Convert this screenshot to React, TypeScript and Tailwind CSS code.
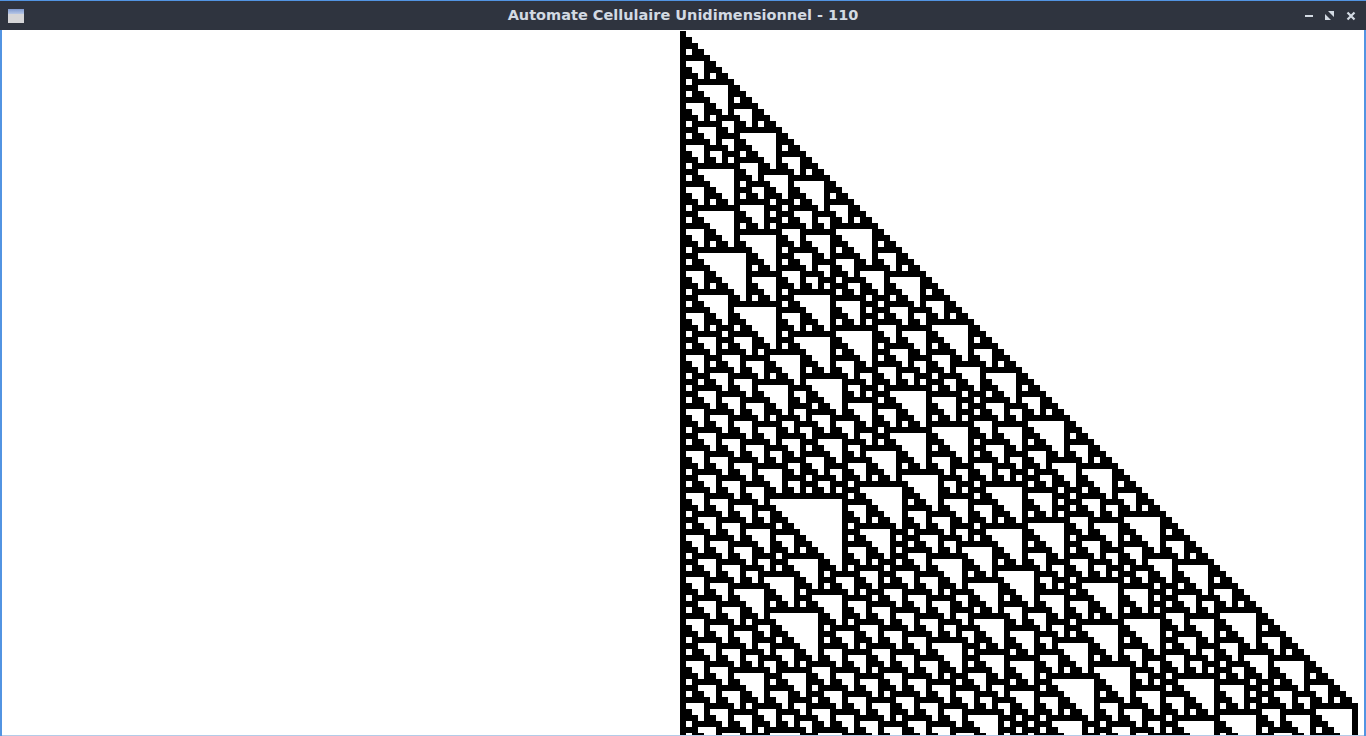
const COLS = 227;
const ROWS = 118;
const CELL = 6;

// rule 110 mirrored, starting from the middle cell; the two edge cells stay empty
function buildPath() {
  let row = new Array(COLS).fill(0);
  row[113] = 1;
  let d = "";
  for (let y = 0; y < ROWS; y++) {
    let x = 0;
    while (x < COLS) {
      if (!row[x]) {
        x++;
        continue;
      }
      const start = x;
      while (x < COLS && row[x]) x++;
      d += `M${start * CELL} ${y * CELL}h${(x - start) * CELL}v${CELL}h${-(x - start) * CELL}z`;
    }
    const next = new Array(COLS).fill(0);
    for (let i = 1; i < COLS - 1; i++) {
      const idx = (row[i + 1] << 2) | (row[i] << 1) | row[i - 1];
      next[i] = (110 >> idx) & 1;
    }
    row = next;
  }
  return d;
}

function AppIcon() {
  return (
    <svg width="16" height="14" viewBox="0 0 16 14" className="block">
      <defs>
        <linearGradient id="appIconTop" x1="0" y1="0" x2="0" y2="1">
          <stop offset="0" stopColor="#7f9ad0" />
          <stop offset="1" stopColor="#b9c8e6" />
        </linearGradient>
      </defs>
      <rect width="16" height="14" fill="#d6d6d8" />
      <rect width="16" height="5" fill="url(#appIconTop)" />
    </svg>
  );
}

function WindowButtons() {
  return (
    <div className="flex items-center gap-[12px] text-[#d3dae3]">
      <svg width="8" height="8" viewBox="0 0 8 8" className="block">
        <rect x="0" y="3" width="8" height="2" fill="currentColor" />
      </svg>
      <svg width="9" height="9" viewBox="0 0 9 9" className="block">
        <path d="M3 0h6v6zM0 3l6 6H0z" fill="currentColor" />
      </svg>
      <svg width="10" height="10" viewBox="0 0 10 10" className="block">
        <path d="M1.5 1.5l7 7M8.5 1.5l-7 7" stroke="currentColor" strokeWidth="2.2" />
      </svg>
    </div>
  );
}

export default function App() {
  const d = buildPath();

  return (
    <div className="w-[1366px] h-[736px] overflow-hidden flex flex-col bg-[#5294e2] px-[2px] pt-[1px]">
      <div className="h-[29px] shrink-0 -mx-[2px] pl-[8px] pr-[10px] bg-[#2f343f] flex items-center justify-between relative">
        <AppIcon />
        <div className="absolute inset-x-0 text-center font-['DejaVu_Sans',sans-serif] font-bold text-[14.5px] text-[#d3dae3]">
          Automate Cellulaire Unidimensionnel - 110
        </div>
        <WindowButtons />
      </div>
      <div className="flex-1 min-h-0 bg-white overflow-hidden pt-[1px] border-b border-[#b4cbe8]">
        <svg
          width={COLS * CELL}
          height={ROWS * CELL}
          viewBox={`0 0 ${COLS * CELL} ${ROWS * CELL}`}
          shapeRendering="crispEdges"
          className="block"
        >
          <path d={d} fill="#000000" />
        </svg>
      </div>
    </div>
  );
}
